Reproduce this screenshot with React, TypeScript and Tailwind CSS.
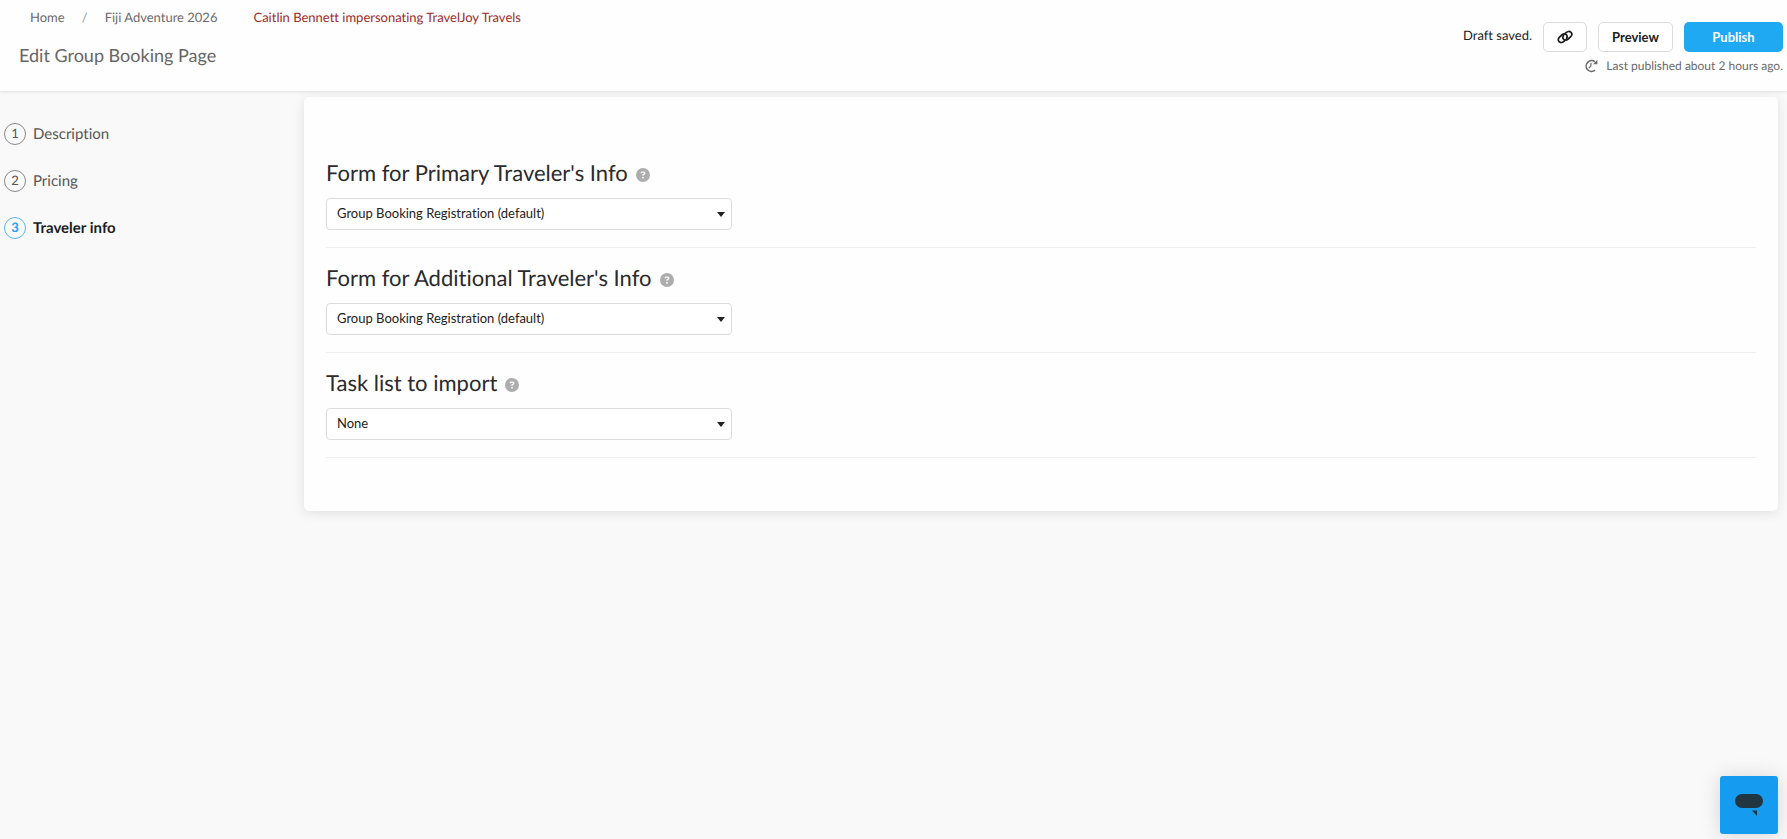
import { FaCircleQuestion } from "react-icons/fa6";

const steps = ["Description", "Pricing", "Traveler info"];
const currentStep = 2;

const fields = [
  {
    id: "primary-form",
    label: "Form for Primary Traveler's Info",
    value: "Group Booking Registration (default)",
  },
  {
    id: "additional-form",
    label: "Form for Additional Traveler's Info",
    value: "Group Booking Registration (default)",
  },
  { id: "task-list", label: "Task list to import", value: "None" },
];

function LinkIcon() {
  return (
    <svg
      viewBox="0 0 16 14"
      className="h-[14px] w-4"
      fill="none"
      stroke="currentColor"
      strokeWidth="1.7"
      strokeLinecap="round"
      aria-hidden="true"
    >
      <path d="M8.3 10.2L6.9 11.4C5.4 12.8 3.2 12.9 2 11.7C0.8 10.5 1.1 8.5 2.5 7.1L4.8 5C6.3 3.7 8.3 3.6 9.4 4.8C10.4 5.9 10.3 7.3 9.5 8.4" />
      <path d="M7.7 3.8L9.1 2.6C10.6 1.2 12.8 1.1 14 2.3C15.2 3.5 14.9 5.5 13.5 6.9L11.2 9C9.7 10.3 7.7 10.4 6.6 9.2C5.6 8.1 5.7 6.7 6.5 5.6" />
    </svg>
  );
}

function HistoryIcon() {
  return (
    <svg
      viewBox="0 0 14 14"
      className="size-[14px]"
      fill="none"
      stroke="currentColor"
      strokeWidth="1.6"
      aria-hidden="true"
    >
      <path d="M10.8 2.7A5.4 5.4 0 1 0 11 11.2" />
      <path d="M7.2 3.8L6.6 7.4L4.8 9" strokeWidth="1.2" />
      <path d="M13.4 0.8V5.2H9Z" fill="currentColor" stroke="none" />
    </svg>
  );
}

function Header() {
  return (
    <header className="flex h-[91px] justify-between bg-[#fefefe] pr-1 shadow-[0_1px_3px_rgba(0,0,0,0.1)]">
      <div>
        <div className="flex pt-[7px] text-[13px] leading-5">
          <nav className="flex pl-[30px] text-[#6b6b6b]" aria-label="Breadcrumb">
            <a href="#">Home</a>
            <span className="w-10 text-center text-[#a0a0a0]">/</span>
            <a href="#">Fiji Adventure 2026</a>
          </nav>
          <p className="ml-9 text-[#9f2a2a]">
            Caitlin Bennett impersonating TravelJoy Travels
          </p>
        </div>
        <h1 className="mt-4 pl-[19px] text-[18px] leading-6 text-[#666]">
          Edit Group Booking Page
        </h1>
      </div>
      <div className="flex flex-col items-end pt-[22px]">
        <div className="flex text-[13px] leading-5">
          <p className="mr-[11px] pt-[3px] text-[#222]">Draft saved.</p>
          <button
            type="button"
            aria-label="Copy link"
            className="mr-[11px] flex h-[30px] w-11 items-center justify-center rounded-[5px] border border-[#dcdcdc] bg-white text-[#1b1c1d]"
          >
            <LinkIcon />
          </button>
          <button
            type="button"
            className="mr-[11px] h-[30px] w-[75px] rounded-[5px] border border-[#dcdcdc] bg-white font-bold text-[#1b1c1d]"
          >
            Preview
          </button>
          <button
            type="button"
            className="h-[30px] w-[99px] rounded-[5px] bg-[#1fa9f3] font-bold text-white"
          >
            Publish
          </button>
        </div>
        <p className="mt-1 flex items-center gap-2 text-[12px] leading-5 text-[#6b6b6b]">
          <HistoryIcon />
          Last published about 2 hours ago.
        </p>
      </div>
    </header>
  );
}

function Sidebar() {
  return (
    <aside className="w-[304px] shrink-0 pt-[25px] pl-1">
      <ol className="flex flex-col gap-[23px]">
        {steps.map((step, i) => (
          <li key={step}>
            <a
              href="#"
              className={
                i === currentStep
                  ? "flex items-center gap-[7px] font-bold text-[#1b1c1d]"
                  : "flex items-center gap-[7px] text-[#555]"
              }
            >
              <span
                className={
                  i === currentStep
                    ? "flex size-[22px] items-center justify-center rounded-full border border-[#5bb5ee] text-[13px] text-[#1fa0ee]"
                    : "flex size-[22px] items-center justify-center rounded-full border border-[#8a8a8a] text-[13px]"
                }
              >
                {i + 1}
              </span>
              <span className="text-[15px] leading-6">{step}</span>
            </a>
          </li>
        ))}
      </ol>
    </aside>
  );
}

export default function App() {
  return (
    <div className="min-h-screen bg-[#f9f9f9] font-[Lato,sans-serif] [font-variant-ligatures:none] [text-rendering:geometricPrecision]">
      <Header />
      <div className="flex pt-[6px] pr-[9px]">
        <Sidebar />
        <main className="grow rounded-[5px] bg-[#fefefe] px-[22px] pt-[61px] pb-[38px] shadow-[0_2px_12px_rgba(0,0,0,0.1)]">
          {fields.map((field) => (
            <section key={field.id} className="mb-[15px] border-b border-[#f0f0f0] pb-[17px]">
              <div className="flex items-center gap-2">
                <label
                  htmlFor={field.id}
                  className="text-[22px] leading-[30px] text-[#2a2b2c]"
                >
                  {field.label}
                </label>
                <FaCircleQuestion className="mt-1 size-[14px] text-[#adadad]" />
              </div>
              <div className="relative mt-[10px] w-[406px]">
                <select
                  id={field.id}
                  className="block h-8 w-full appearance-none rounded-[4px] border border-[#dcdcdc] bg-white px-[10px] text-[13px] text-[#222]"
                >
                  <option>{field.value}</option>
                </select>
                <svg
                  viewBox="0 0 8 5"
                  className="pointer-events-none absolute top-[14px] right-[7px] h-[5px] w-2"
                  fill="#222"
                  aria-hidden="true"
                >
                  <path d="M0 0H8L4 5Z" />
                </svg>
              </div>
            </section>
          ))}
        </main>
      </div>
      <button
        type="button"
        aria-label="Open chat"
        className="fixed right-[9px] bottom-[5px] flex size-[58px] items-center justify-center rounded-[3px] bg-[#159cf0] shadow-[0_1px_20px_rgba(0,0,0,0.15)]"
      >
        <svg viewBox="0 0 28 22" className="h-[22px] w-7" fill="#213640" aria-hidden="true">
          <rect x="0" y="0" width="28" height="14" rx="7" />
          <path d="M17 16.5H22V22Z" />
        </svg>
      </button>
    </div>
  );
}
